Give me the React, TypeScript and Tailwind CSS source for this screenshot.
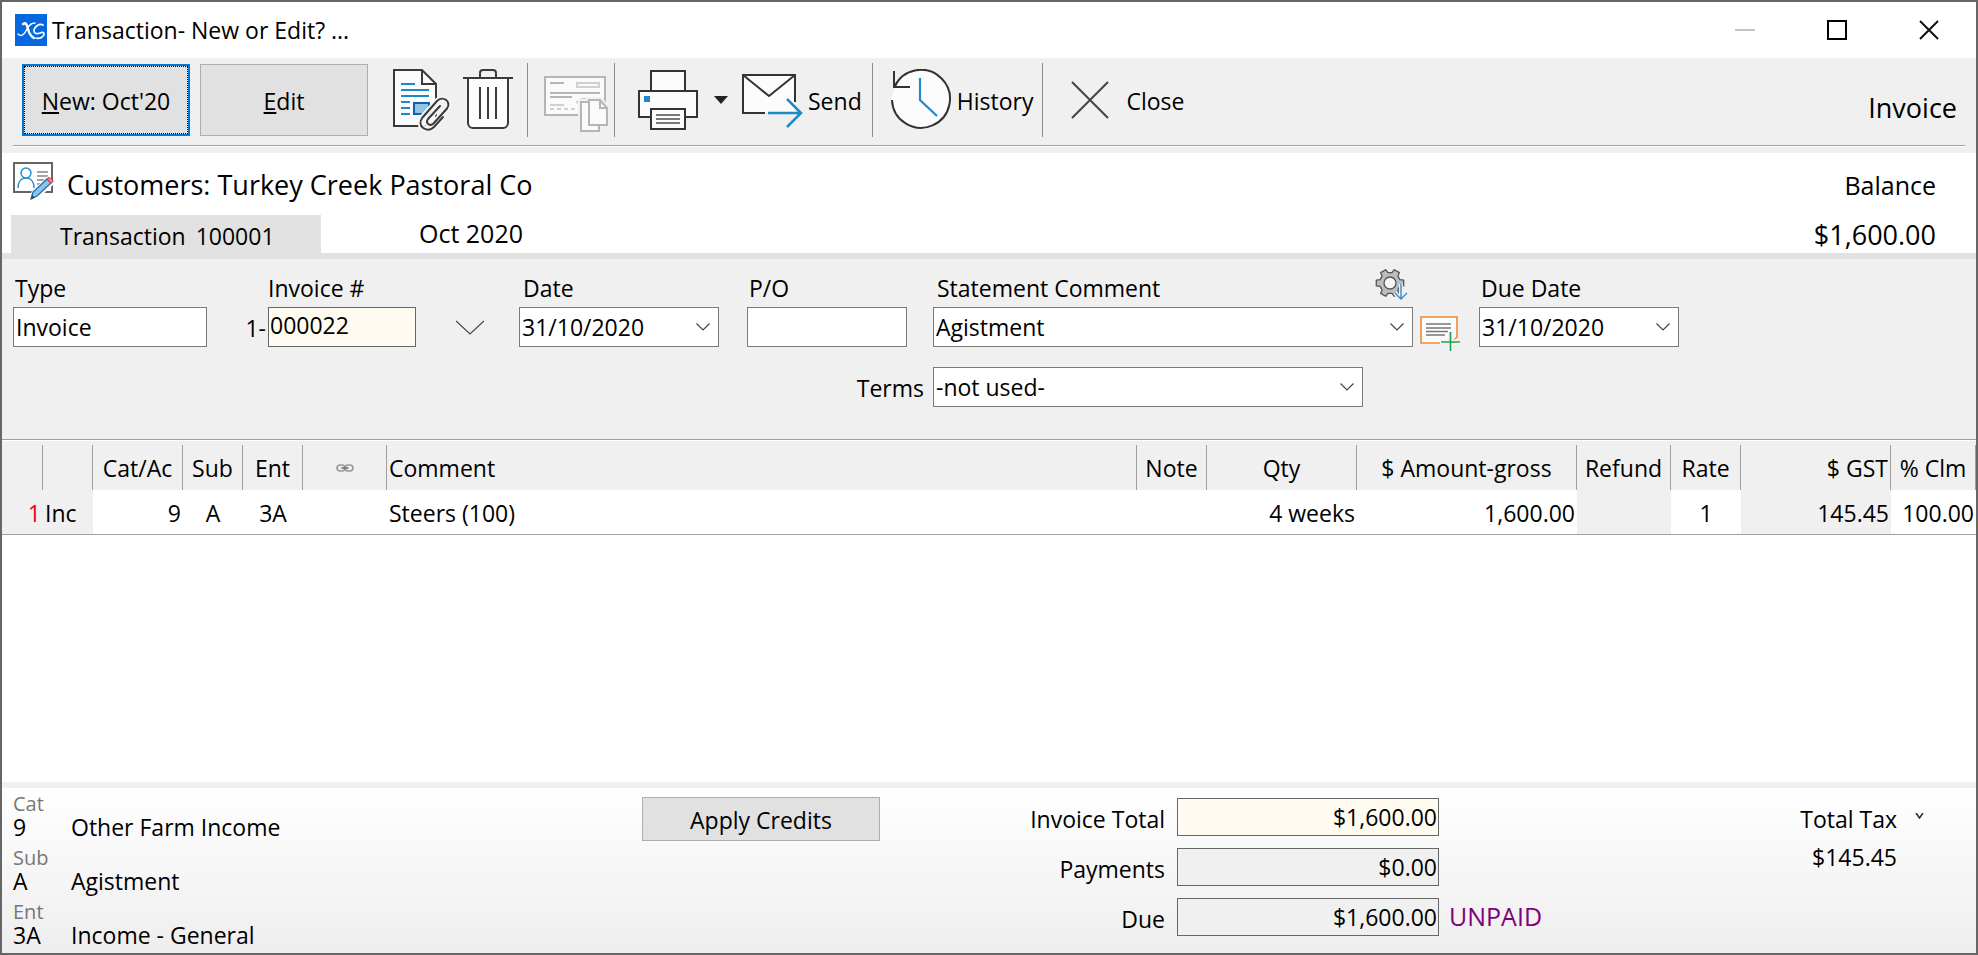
import type { ReactNode } from "react";

const gearPath = Array.from({ length: 6 }, (_, i) => {
  const at = (radius: number, deg: number) => {
    const a = ((i * 60 + deg) * Math.PI) / 180;
    return `${(16 + radius * Math.cos(a)).toFixed(1)} ${(16 + radius * Math.sin(a)).toFixed(1)}`;
  };
  return `${i ? "L" : "M"}${at(10.5, -19)}L${at(14, -12)}L${at(14, 12)}L${at(10.5, 19)}`;
}).join("") + "Z";

function AppIcon() {
  return (
    <svg viewBox="0 0 32 32" className="h-8 w-8 bg-[#0568e0]" fill="none" stroke="#fff" strokeLinecap="round">
      <path d="M3 20c4 4 7-1 9-5s4-6 8-6" strokeWidth="1.400" />
      <path d="M8 10c3-2 4 1 5 5s2 7 6 9" strokeWidth="2.400" />
      <path d="M28 11c-4-2-9 2-9 6 0 3 3 3 6 2 2-1 4-1 4 1 0 3-4 5-8 4" strokeWidth="1.700" />
    </svg>
  );
}

function AttachIcon() {
  const clip =
    "M51 49 42 59c-7 7-18-1-11.500-9.500L45 33c6-6 15 1 10 7.500L41.500 55.500c-3.500 3.500-8.500-.500-5.500-4.500L48 38";
  return (
    <svg viewBox="0 0 60 64" className="h-16 w-15" fill="none" strokeWidth="2">
      <path d="M2 2h28l14 14v42H2Z" fill="#fcfcfc" stroke="#3a3a3a" />
      <path d="M30 2v14h14" stroke="#3a3a3a" />
      <path d="M9 16h14M9 22h28M9 28h28M9 34h9M9 40h9M9 46h9" stroke="#1e88c9" />
      <path d="M22 35h15v11H22Z" fill="#90c5e8" stroke="#0a63b1" />
      <path d={clip} stroke="#f4f4f4" strokeWidth="6" />
      <path d={clip} stroke="#3a3a3a" strokeLinecap="round" />
    </svg>
  );
}

function TrashIcon() {
  return (
    <svg viewBox="0 0 52 64" className="h-16 w-13" fill="none" stroke="#3a3a3a" strokeWidth="2">
      <path d="M6 10v45a5 5 0 0 0 5 5h30a5 5 0 0 0 5-5V10" fill="#fcfcfc" />
      <path d="M1 10h50M18 10V5a3 3 0 0 1 3-3h10a3 3 0 0 1 3 3v5M18 19v32M26 19v32M34 19v32" />
    </svg>
  );
}

function CopyChequeIcon() {
  return (
    <svg viewBox="0 0 66 60" className="h-15 w-[66px]" fill="none" stroke="#b5b5b5" strokeWidth="2">
      <path d="M2 3h60v38H2Z" fill="#fafafa" />
      <path d="M7 9h14M7 19h50M7 23h22" />
      <path d="M34 9h22v4H34ZM7 31h14M7 35h4M14 35h4M21 35h4M28 35h4M33 29c4-4 7-5 10-4" stroke="#d0d0d0" />
      <path d="M38 28h18v30H38ZM46 26h11l7 8v18H46Z" stroke="#f0f0f0" strokeWidth="6" />
      <path d="M38 28h18v29H38Z" fill="#fafafa" />
      <path d="M46 26h11l7 8v17H46Z" fill="#fafafa" />
      <path d="M57 26v8h7" />
    </svg>
  );
}

function PrinterIcon() {
  return (
    <svg viewBox="0 0 62 62" className="h-[62px] w-[62px]" fill="#fcfcfc" stroke="#333" strokeWidth="2">
      <path d="M14 2h34v22H14Z" />
      <path d="M2 22h58v26H2Z" />
      <path d="M14 40h34v20H14Z" />
      <path d="M19 46h24M19 50h24M19 54h24" stroke="#777" />
      <path d="M7 27h6v6H7Z" fill="#1e88c9" stroke="none" />
    </svg>
  );
}

function SendIcon() {
  return (
    <svg viewBox="0 0 62 58" className="h-[58px] w-[62px]" fill="none" stroke="#333" strokeWidth="2">
      <path d="M2 3h52v38H2Z" fill="#fcfcfc" stroke="none" />
      <path d="M24 41H2V3h52v27M2 3l26 21L54 3" />
      <path d="M27 41h33M46 27l14 14-14 14" stroke="#1e88c9" strokeWidth="2.500" />
    </svg>
  );
}

function HistoryIcon() {
  return (
    <svg viewBox="0 0 62 62" className="h-[62px] w-[62px]" fill="none" stroke="#333" strokeWidth="2">
      <circle cx="31" cy="31" r="29" fill="#fcfcfc" stroke="none" />
      <path d="M4.500 18A29 29 0 1 1 2 31" />
      <path d="M4 2v16h16" />
      <path d="M30 9v22l17 16" stroke="#1e88c9" strokeWidth="2.200" />
    </svg>
  );
}

function CustomerIcon() {
  return (
    <svg viewBox="0 0 42 40" className="h-10 w-[42px]" fill="none" strokeWidth="2">
      <path d="M2 2h38v29H2Z" fill="#fff" stroke="#666" />
      <path d="M25 11h11M25 15h11M25 19h9M25 23h5" stroke="#888" strokeWidth="1.300" />
      <circle cx="14" cy="12" r="5" stroke="#2b8fd0" strokeWidth="1.500" />
      <path d="M6 27c0-6 3-10 8-10s8 4 8 10" stroke="#2b8fd0" strokeWidth="1.500" />
      <path d="m19 38 2-7 15-14 5 5-15 14Z" fill="#fff" stroke="#fff" strokeWidth="3" />
      <path d="m19 38 2-7 14-13 4 4-14 13Z" fill="#8cc4ec" stroke="#1f6fae" strokeWidth="1.300" />
      <path d="m35 18 2-1.500q3 1 4 4L39 22Z" fill="#f29a9a" stroke="#e0454b" strokeWidth="1.300" />
      <path d="m19 38 1-4 3 2.500Z" fill="#444" />
    </svg>
  );
}

function GearDownIcon() {
  return (
    <svg viewBox="0 0 36 34" className="h-[34px] w-9" fill="none">
      <path d={gearPath} fill="#bdbdbd" stroke="#555" strokeWidth="1.300" strokeLinejoin="round" />
      <circle cx="16" cy="16" r="6" fill="#f4f4f4" stroke="#555" strokeWidth="1.300" />
      <path d="M27 17v15M21 26l6 6 6-6" stroke="#f0f0f0" strokeWidth="4" />
      <path d="M27 17v15M21 26l6 6 6-6" stroke="#2b8fd0" strokeWidth="1.400" />
    </svg>
  );
}

function AddNoteIcon() {
  return (
    <svg viewBox="0 0 42 36" className="h-9 w-[42px]" fill="none">
      <path d="M2 2h36v26H2Z" fill="#fcfcfc" />
      <path d="M21 28H2V2h36v20l-3 3" stroke="#ee8a35" strokeWidth="1.600" />
      <path d="M7 9h25M7 13h25M7 16.500h22M7 20h19" stroke="#777" strokeWidth="1.400" />
      <path d="M31.500 17v19M22 27h19" stroke="#f4f4f4" strokeWidth="5" />
      <path d="M31.500 17v19M22 27h19" stroke="#1da44f" strokeWidth="1.600" />
    </svg>
  );
}

function LinkIcon() {
  return (
    <svg viewBox="0 0 18 8" className="mx-auto h-2 w-[18px]" fill="none" stroke="#999" strokeWidth="1.700">
      <rect x="1" y="1" width="8" height="6" rx="3" />
      <rect x="9" y="1" width="8" height="6" rx="3" />
      <path d="M5.500 4h7" stroke="#777" />
    </svg>
  );
}

function Chevron({ className }: { className: string }) {
  return (
    <svg viewBox="0 0 28 16" className={className} fill="none" stroke="#444" strokeWidth="2.400">
      <path d="m1 1 13 13L27 1" />
    </svg>
  );
}

type SelectBoxProps = { id: string; value: string; className: string };

function SelectBox({ id, value, className }: SelectBoxProps) {
  return (
    <div className={`relative ${className}`}>
      <select
        id={id}
        defaultValue={value}
        className="h-10 w-full appearance-none border border-[#7a7a7a] bg-white pr-8 pl-[2px]"
      >
        <option>{value}</option>
      </select>
      <Chevron className="pointer-events-none absolute top-4 right-[9px] h-2 w-[14px]" />
    </div>
  );
}

function Divider() {
  return <div className="h-[74px] w-px shrink-0 bg-[#8c8c8c]" />;
}

type Column = {
  head: ReactNode;
  value: string;
  width?: string;
  headAlign?: string;
  align?: string;
  cell?: string;
};

const columns: Column[] = [
  { head: "", value: "1", width: "w-[41px]", align: "text-right", cell: "bg-[#f0f0f0] text-[#f00010]" },
  { head: "", value: "Inc", width: "w-[50px]", cell: "bg-[#f0f0f0]" },
  { head: "Cat/Ac", value: "9", width: "w-[90px]", headAlign: "text-center", align: "text-right" },
  { head: "Sub", value: "A", width: "w-[60px]", headAlign: "text-center", align: "text-center" },
  { head: "Ent", value: "3A", width: "w-[60px]", headAlign: "text-center", align: "text-center" },
  { head: <LinkIcon />, value: "", width: "w-[84px]" },
  { head: "Comment", value: "Steers (100)" },
  { head: "Note", value: "", width: "w-[70px]", headAlign: "text-center" },
  { head: "Qty", value: "4 weeks", width: "w-[150px]", headAlign: "text-center", align: "text-right" },
  { head: "$ Amount-gross", value: "1,600.00", width: "w-[220px]", headAlign: "text-center", align: "text-right" },
  { head: "Refund", value: "", width: "w-[94px]", headAlign: "text-center", cell: "bg-[#f0f0f0]" },
  { head: "Rate", value: "1", width: "w-[70px]", headAlign: "text-center", align: "text-center" },
  { head: "$ GST", value: "145.45", width: "w-[150px]", headAlign: "text-right", align: "text-right", cell: "bg-[#f0f0f0]" },
  { head: "% Clm", value: "100.00", width: "w-[85px]", headAlign: "text-center", align: "text-right" },
];

const codes = [
  { label: "Cat", code: "9", name: "Other Farm Income" },
  { label: "Sub", code: "A", name: "Agistment" },
  { label: "Ent", code: "3A", name: "Income - General" },
];

const totals = [
  { id: "invoice-total", label: "Invoice Total", value: "$1,600.00", bg: "bg-[#fffbf0]" },
  { id: "payments", label: "Payments", value: "$0.00", bg: "bg-[#f0f0f0]" },
  { id: "due", label: "Due", value: "$1,600.00", bg: "bg-[#f0f0f0]", status: "UNPAID" },
];

export default function App() {
  return (
    <div className="flex min-h-screen flex-col border-2 border-[#666] bg-white font-['Open_Sans','Noto_Sans',sans-serif] text-[23px] leading-8 text-black">
      <header className="flex h-14 shrink-0 items-center pl-[13px]">
        <AppIcon />
        <h1 className="pl-[5px]">Transaction- New or Edit? ...</h1>
        <div className="ml-auto flex pr-px">
          <button aria-label="Minimize" className="grid h-14 w-[92px] place-items-center">
            <svg viewBox="0 0 20 20" className="h-5 w-5" stroke="#c4c4c4" strokeWidth="2">
              <path d="M0 10h20" />
            </svg>
          </button>
          <button aria-label="Maximize" className="grid h-14 w-[92px] place-items-center">
            <svg viewBox="0 0 20 20" className="h-5 w-5" fill="none" stroke="#000" strokeWidth="2">
              <path d="M1 1h18v18H1Z" />
            </svg>
          </button>
          <button aria-label="Close window" className="grid h-14 w-[92px] place-items-center">
            <svg viewBox="0 0 20 20" className="h-5 w-5" stroke="#111" strokeWidth="2">
              <path d="m1 1 18 18M19 1 1 19" />
            </svg>
          </button>
        </div>
      </header>

      <div className="bg-[#f0f0f0] px-[11px] pb-[6px]">
        <div className="flex h-[88px] items-center border-b border-[#a0a0a0] pb-[3px]">
          <button className="ml-[9px] h-[72px] w-[168px] border-2 border-[#0078d7] bg-[#e1e1e1] pt-[2px] outline-1 -outline-offset-3 outline-black outline-dotted">
            <u className="underline-offset-2">N</u>ew: Oct'20
          </button>
          <button className="ml-[10px] h-[72px] w-[168px] border border-[#adadad] bg-[#e1e1e1] pt-[2px]">
            <u className="underline-offset-2">E</u>dit
          </button>
          <button aria-label="Attach document" className="ml-6">
            <AttachIcon />
          </button>
          <button aria-label="Delete" className="mr-[13px] ml-[10px]">
            <TrashIcon />
          </button>
          <Divider />
          <button aria-label="Copy cheque" disabled className="mr-[5px] ml-[15px] pt-2">
            <CopyChequeIcon />
          </button>
          <Divider />
          <button aria-label="Print" className="ml-[22px]">
            <PrinterIcon />
          </button>
          <button aria-label="Print options" className="ml-[14px]">
            <svg viewBox="0 0 16 8" className="h-2 w-4" fill="#222">
              <path d="M1 0h14L8 8Z" />
            </svg>
          </button>
          <button className="mr-[10px] ml-3 flex items-center pt-[2px]">
            <SendIcon />
            <span className="pl-[5px]">Send</span>
          </button>
          <Divider />
          <button className="mr-[9px] ml-[17px] flex items-center">
            <HistoryIcon />
            <span className="pt-[2px] pl-[5px]">History</span>
          </button>
          <Divider />
          <button className="ml-[27px] flex items-center">
            <svg viewBox="0 0 40 40" className="h-10 w-10" stroke="#444" strokeWidth="2">
              <path d="m2 2 36 36M38 2 2 38" />
            </svg>
            <span className="pt-[2px] pl-4">Close</span>
          </button>
          <p className="mr-2 ml-auto pt-4 text-[27px]">Invoice</p>
        </div>
        <div className="h-px bg-white" />
      </div>

      <section className="flex h-[100px] shrink-0 justify-between">
        <div>
          <div className="flex h-[62px] items-start pt-2 pl-[10px]">
            <CustomerIcon />
            <h2 className="pt-2 pl-[13px] text-[27px]">Customers: Turkey Creek Pastoral Co</h2>
          </div>
          <div className="flex pl-[9px]">
            <div className="flex h-[38px] w-[310px] items-center gap-[10px] bg-[#e2e2e2] pt-1 pl-[49px]">
              <span>Transaction</span>
              <span>100001</span>
            </div>
            <p className="pt-[2px] pl-[98px] text-[25px]">Oct 2020</p>
          </div>
        </div>
        <div className="pt-4 pr-10 text-right">
          <p className="text-[25px]">Balance</p>
          <p className="pt-[18px] text-[27px]">$1,600.00</p>
        </div>
      </section>

      <form className="flex flex-col gap-5 border-t-6 border-[#e2e2e2] bg-[#f0f0f0] pb-8 pl-[11px]">
        <div className="flex items-end pt-[13px]">
          <div className="flex flex-col gap-[3px]">
            <label htmlFor="type" className="pl-[2px]">Type</label>
            <input id="type" defaultValue="Invoice" className="h-10 w-[194px] border border-[#7a7a7a] bg-white px-[2px]" />
          </div>
          <span className="w-[61px] pr-[2px] pb-[3px] text-right">1-</span>
          <div className="flex flex-col gap-[3px]">
            <label htmlFor="invoice-no">Invoice #</label>
            <input id="invoice-no" defaultValue="000022" className="h-10 w-[148px] border border-[#666] bg-[#fffbf0] px-px pb-1" />
          </div>
          <button type="button" aria-label="Invoice number options" className="mr-[33px] ml-[38px] flex h-10 w-8 items-center justify-center">
            <svg viewBox="0 0 28 15" className="h-[15px] w-7" fill="none" stroke="#444" strokeWidth="1.200">
              <path d="m0 1 14 13L28 1" />
            </svg>
          </button>
          <div className="flex flex-col gap-[3px] pr-7">
            <label htmlFor="date" className="pl-1">Date</label>
            <SelectBox id="date" value="31/10/2020" className="w-[200px]" />
          </div>
          <div className="flex flex-col gap-[3px] pr-[26px]">
            <label htmlFor="po" className="pl-[2px]">P/O</label>
            <input id="po" className="h-10 w-[160px] border border-[#7a7a7a] bg-white px-[2px]" />
          </div>
          <div className="flex flex-col gap-[3px]">
            <div className="flex h-8 justify-between pr-[3px]">
              <label htmlFor="statement-comment" className="pl-1">Statement Comment</label>
              <button type="button" aria-label="Comment settings" className="-mt-2">
                <GearDownIcon />
              </button>
            </div>
            <SelectBox id="statement-comment" value="Agistment" className="w-[480px]" />
          </div>
          <button type="button" aria-label="Add comment" className="mr-[18px] ml-[6px] h-8">
            <AddNoteIcon />
          </button>
          <div className="flex flex-col gap-[3px]">
            <label htmlFor="due-date" className="pl-[2px]">Due Date</label>
            <SelectBox id="due-date" value="31/10/2020" className="w-[200px]" />
          </div>
        </div>
        <div className="flex items-center">
          <label htmlFor="terms" className="w-[920px] pt-[2px] pr-[9px] text-right">Terms</label>
          <SelectBox id="terms" value="-not used-" className="w-[430px]" />
        </div>
      </form>

      <div className="grow border-t border-[#a0a0a0]">
        <table className="w-full table-fixed border-b border-[#a0a0a0]">
          <thead className="bg-[#f0f0f0]">
            <tr>
              {columns.map((col, i) => (
                <th key={i} className={`border-t border-white p-0 pt-1 font-normal ${col.width ?? ""}`}>
                  <div className={`flex h-[45px] flex-col justify-center border-r border-[#a0a0a0] px-[2px] whitespace-nowrap ${col.headAlign ?? "text-left"}`}>
                    {col.head}
                  </div>
                </th>
              ))}
            </tr>
          </thead>
          <tbody>
            <tr className="h-11">
              {columns.map((col, i) => (
                <td key={i} className={`px-[2px] pt-[2px] pb-0 whitespace-nowrap ${col.align ?? ""} ${col.cell ?? ""}`}>
                  {col.value}
                </td>
              ))}
            </tr>
          </tbody>
        </table>
      </div>

      <footer className="flex h-[171px] shrink-0 border-t-6 border-[#f0f0f0] bg-linear-to-b from-white to-[#eeeeee] pl-[11px]">
        <dl className="w-[629px] pt-[5px]">
          {codes.map((item) => (
            <div key={item.label} className="pb-2">
              <dt className="text-[20px] leading-[22px] text-[#777]">{item.label}</dt>
              <dd className="flex leading-6">
                <span className="w-[58px]">{item.code}</span>
                <span>{item.name}</span>
              </dd>
            </div>
          ))}
        </dl>
        <button className="mt-[9px] h-11 w-[238px] border border-[#adadad] bg-[#e1e1e1] pt-[2px]">Apply Credits</button>
        <div className="flex flex-col gap-3 pt-[10px]">
          {totals.map((row) => (
            <div key={row.id} className="flex h-[38px] items-center">
              <label htmlFor={row.id} className="w-[297px] pt-1 pr-3 text-right">{row.label}</label>
              <input
                id={row.id}
                readOnly
                defaultValue={row.value}
                className={`h-[38px] w-[262px] border border-[#666] px-px text-right ${row.bg}`}
              />
              {row.status && <span className="pb-[2px] pl-[10px] text-[25px] text-[#800080]">{row.status}</span>}
            </div>
          ))}
        </div>
        <div className="ml-auto flex items-start pt-[15px] pr-[52px]">
          <div className="flex flex-col gap-[6px] pr-[18px] text-right">
            <span>Total Tax</span>
            <span>$145.45</span>
          </div>
          <button aria-label="Tax breakdown" className="pt-[10px]">
            <svg viewBox="0 0 9 6" className="h-[6px] w-[9px]" fill="none" stroke="#333" strokeWidth="1.600">
              <path d="m1 0 3.500 5L8 0" />
            </svg>
          </button>
        </div>
      </footer>
    </div>
  );
}
